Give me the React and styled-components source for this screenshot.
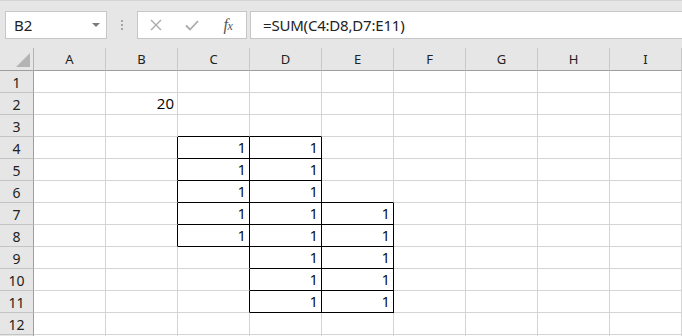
import React from 'react';
import styled, { createGlobalStyle } from 'styled-components';

const COLUMNS = ['A', 'B', 'C', 'D', 'E', 'F', 'G', 'H', 'I'];
const ROW_COUNT = 13;
const LABELLED_ROWS = 12; // row 13 only peeks in by a pixel

const VALUES = { B2: 20 };
['C4', 'C5', 'C6', 'C7', 'C8'].forEach(k => (VALUES[k] = 1));
[4, 5, 6, 7, 8, 9, 10, 11].forEach(r => (VALUES[`D${r}`] = 1));
[7, 8, 9, 10, 11].forEach(r => (VALUES[`E${r}`] = 1));

// C4:D8 and D7:E11 carry thin black borders
const isBordered = (col, row) => {
  const c = COLUMNS.indexOf(col);
  if (c < 0) return false;
  if (c >= 2 && c <= 3 && row >= 4 && row <= 8) return true;
  if (c >= 3 && c <= 4 && row >= 7 && row <= 11) return true;
  return false;
};

const GlobalStyle = createGlobalStyle`
  body {
    margin: 0;
    background: #ffffff;
    overflow: hidden;
  }
`;

const Page = styled.div`
  width: 682px;
  height: 336px;
  overflow: hidden;
  font-family: 'Noto Sans', 'Open Sans', sans-serif;
  color: #222;
`;

const FormulaBar = styled.div`
  box-sizing: border-box;
  height: 48px;
  display: flex;
  align-items: flex-start;
  padding: 10px 0 0 5px;
  background: #e6e6e6;
  border-top: 1px solid #d4d4d4;
`;

const NameBox = styled.div`
  box-sizing: border-box;
  width: 102px;
  height: 28px;
  display: flex;
  align-items: center;
  justify-content: space-between;
  padding: 0 6px 0 8px;
  background: #fff;
  border: 1px solid #c6c6c6;
  font-size: 15px;
  color: #222;
`;

const DropArrow = styled.span`
  width: 0;
  height: 0;
  border-left: 4px solid transparent;
  border-right: 4px solid transparent;
  border-top: 4px solid #7a7a7a;
`;

const Grip = styled.div`
  width: 30px;
  height: 28px;
  display: flex;
  flex-direction: column;
  align-items: center;
  justify-content: center;
  gap: 2px;

  span {
    width: 2px;
    height: 2px;
    background: #a6a6a6;
  }
`;

const ButtonBox = styled.div`
  box-sizing: border-box;
  width: 110px;
  height: 28px;
  display: flex;
  background: #fff;
  border: 1px solid #c6c6c6;
`;

const BarButton = styled.div`
  width: 36px;
  display: flex;
  align-items: center;
  justify-content: center;
`;

const FxLabel = styled.span`
  font-family: 'Liberation Serif', serif;
  font-style: italic;
  font-size: 16px;
  color: #555;
  letter-spacing: -0.5px;

  small {
    font-size: 12px;
  }
`;

const FormulaInput = styled.div`
  box-sizing: border-box;
  flex: 1;
  height: 28px;
  margin-left: 3px;
  padding-left: 12px;
  display: flex;
  align-items: center;
  background: #fff;
  border: 1px solid #c6c6c6;
  border-right: none;
  font-size: 15px;
  letter-spacing: -0.2px;
  color: #222;
`;

const Sheet = styled.div`
  display: grid;
  grid-template-columns: 34px repeat(9, 72px);
  grid-template-rows: 23px;
  grid-auto-rows: 22px;
`;

const Corner = styled.div`
  box-sizing: border-box;
  background: #e6e6e6;
  border-right: 1px solid #b4b4b4;
  border-bottom: 1px solid #9e9e9e;
  display: flex;
  align-items: flex-end;
  justify-content: flex-end;
  padding: 0 3px 3px 0;
`;

const ColHeader = styled.div`
  box-sizing: border-box;
  background: #e6e6e6;
  border-right: 1px solid #c8c8c8;
  border-bottom: 1px solid #9e9e9e;
  text-align: center;
  font-size: 13px;
  line-height: 23px;
  color: #222;
`;

const RowHeader = styled.div`
  box-sizing: border-box;
  background: #e6e6e6;
  border-right: 1px solid #9e9e9e;
  border-bottom: 1px solid #c4c4c4;
  text-align: center;
  font-size: 14px;
  padding-top: 3px;
  line-height: 18px;
  color: #222;
`;

const Cell = styled.div`
  box-sizing: border-box;
  border-right: 1px solid ${p => (p.$edgeRight ? '#000' : '#d4d4d4')};
  border-bottom: 1px solid ${p => (p.$edgeBottom ? '#000' : '#d4d4d4')};
  padding-right: 3px;
  text-align: right;
  font-family: 'Open Sans', 'Noto Sans', sans-serif;
  font-size: 15px;
  line-height: 21px;
  color: #000;
`;

const CloseIcon = () => (
  <svg width="12" height="12" viewBox="0 0 12 12">
    <path d="M1 1 L11 11 M11 1 L1 11" stroke="#ababab" strokeWidth="1.4" fill="none" />
  </svg>
);

const CheckIcon = () => (
  <svg width="14" height="11" viewBox="0 0 14 11">
    <path d="M1 5.5 L5 9.5 L13 1" stroke="#ababab" strokeWidth="1.8" fill="none" />
  </svg>
);

const SelectAll = () => (
  <svg width="14" height="14" viewBox="0 0 14 14">
    <polygon points="14,0 14,14 0,14" fill="#b4b4b4" />
  </svg>
);

function App() {
  const rows = Array.from({ length: ROW_COUNT }, (_, i) => i + 1);

  return (
    <Page>
      <GlobalStyle />
      <FormulaBar>
        <NameBox>
          B2
          <DropArrow />
        </NameBox>
        <Grip>
          <span />
          <span />
          <span />
        </Grip>
        <ButtonBox>
          <BarButton>
            <CloseIcon />
          </BarButton>
          <BarButton>
            <CheckIcon />
          </BarButton>
          <BarButton>
            <FxLabel>
              f<small>x</small>
            </FxLabel>
          </BarButton>
        </ButtonBox>
        <FormulaInput>=SUM(C4:D8,D7:E11)</FormulaInput>
      </FormulaBar>

      <Sheet>
        <Corner>
          <SelectAll />
        </Corner>
        {COLUMNS.map(col => (
          <ColHeader key={col}>{col}</ColHeader>
        ))}

        {rows.map(row => (
          <React.Fragment key={row}>
            <RowHeader>{row <= LABELLED_ROWS ? row : ''}</RowHeader>
            {COLUMNS.map((col, c) => {
              const next = COLUMNS[c + 1];
              const here = isBordered(col, row);
              return (
                <Cell
                  key={col}
                  $edgeRight={here || isBordered(next, row)}
                  $edgeBottom={here || isBordered(col, row + 1)}
                >
                  {VALUES[`${col}${row}`]}
                </Cell>
              );
            })}
          </React.Fragment>
        ))}
      </Sheet>
    </Page>
  );
}

export default App;
